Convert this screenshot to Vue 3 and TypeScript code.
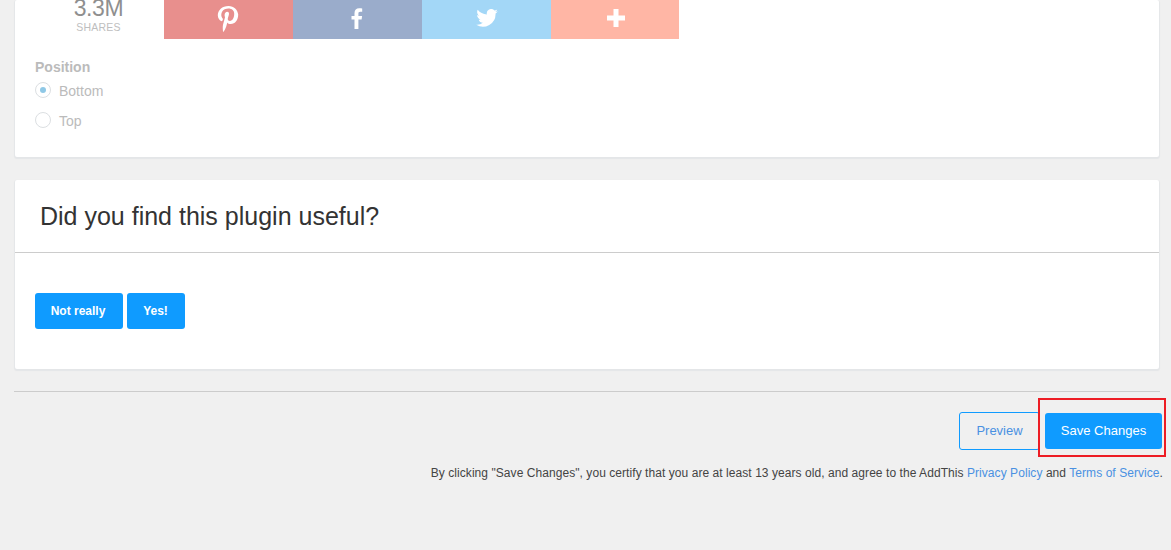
<script setup lang="ts">
const options = [
  { label: 'Bottom', checked: true },
  { label: 'Top', checked: false },
]
</script>

<template>
  <div class="page">
    <section class="card first">
      <div class="share-row">
        <div class="count">
          <div class="num">3.3M</div>
          <div class="lbl">SHARES</div>
        </div>
        <div class="tile pin">
          <svg width="22" height="26" viewBox="0 0 22 26"><path fill="#fff" d="M11.600 0C5 0 .8 4.300.8 9.200c0 2.900 1.600 5.200 4 6l.9-.9c.2-.6.3-1.200 0-1.700-1-1.100-1.400-2.200-1.400-3.500 0-3.700 2.800-6.500 7-6.500 3.800 0 5.900 2.200 5.900 5.200 0 3.900-1.700 7.100-4.300 7.100-1.400 0-2.500-1.100-2.100-2.500.4-1.700 1.200-3.500 1.200-4.700 0-1.100-.6-2-1.800-2-1.400 0-2.600 1.500-2.600 3.400 0 1.300.4 2.100.4 2.100L6 18.700c-.5 2.200-.1 5.200 0 6.700.1.400.4.500.6.300.7-.9 2.100-3.400 2.700-5.500l1-3.800c.5.900 1.900 1.700 3.400 1.700 4.500 0 7.500-4.100 7.500-9.500C20.700 4 16.900 0 11.600 0z"/></svg>
        </div>
        <div class="tile fb">
          <svg width="12" height="21" viewBox="0 0 12 21"><path fill="#fff" d="M3.500 21V11.500H.5V8h3V5.300C3.500 2 5.300.3 8.200.3c1.300 0 2.300.1 3 .2v3.200H9.300c-1.500 0-1.900.7-1.900 1.800V8h3.700l-.5 3.500H7.400V21z"/></svg>
        </div>
        <div class="tile tw">
          <svg width="22" height="18" viewBox="0 0 24 20"><path fill="#fff" d="M24 2.400c-.9.400-1.800.7-2.800.8 1-.6 1.800-1.600 2.200-2.700-1 .6-2 1-3.100 1.200A4.900 4.900 0 0 0 11.900 6.200C7.800 6 4.100 4 1.700.9c-1.300 2.200-.6 5.100 1.500 6.500-.8 0-1.500-.2-2.200-.6 0 2.300 1.600 4.500 4 5-.7.200-1.500.2-2.200.1.600 2 2.400 3.400 4.600 3.400A9.900 9.900 0 0 1 0 17.400 14 14 0 0 0 21.500 5c1-.7 1.800-1.600 2.500-2.600z"/></svg>
        </div>
        <div class="tile plus">
          <svg width="18" height="18" viewBox="0 0 18 18"><path fill="#fff" d="M6.500 0h5v6.500H18v5h-6.500V18h-5v-6.500H0v-5h6.500z"/></svg>
        </div>
      </div>
      <div class="position">
        <div class="pos-title">Position</div>
        <label v-for="o in options" :key="o.label" class="radio">
          <span class="dot" :class="{ on: o.checked }"></span>
          <span class="radio-text">{{ o.label }}</span>
        </label>
      </div>
    </section>

    <section class="card second">
      <h2 class="head">Did you find this plugin useful?</h2>
      <div class="body">
        <button class="btn not" type="button">Not really</button>
        <button class="btn yes" type="button">Yes!</button>
      </div>
    </section>

    <hr class="rule" />

    <div class="actions">
      <button class="ghost" type="button">Preview</button>
      <div class="save-wrap">
        <button class="btn save" type="button">Save Changes</button>
        <span class="highlight"></span>
      </div>
    </div>

    <p class="legal">
      By clicking "Save Changes", you certify that you are at least 13 years old, and agree to the AddThis
      <a>Privacy Policy</a> and <a>Terms of Service</a>.
    </p>
  </div>
</template>

<style>
html, body { margin: 0; background: #f0f0f0; }
</style>

<style scoped>
.page {
  height: 550px;
  overflow: hidden;
  background: #f0f0f0;
  font-family: "Liberation Sans", Arial, sans-serif;
  position: relative;
}
.card {
  margin: 0 12px 0 15px;
  background: #fff;
  border-radius: 2px;
  box-shadow: 0 1px 1px 1px #e4e6e8;
}
.first { height: 157px; }
.share-row { display: flex; height: 39px; margin-left: 20px; }
.count { width: 129px; text-align: center; padding-right: 2px; box-sizing: border-box; }
.num {
  font-size: 23px; line-height: 22px; margin-top: -3px; letter-spacing: -0.4px;
  color: #8f8f8f;
}
.lbl { font-size: 10.5px; line-height: 12px; margin-top: 2px; color: #bebebe; letter-spacing: 0.2px; }
.tile {
  width: 129px; height: 39px; box-sizing: border-box;
  display: flex; align-items: center; justify-content: center;
  padding-bottom: 9px;
}
.tile svg { margin-top: 6px; }
.pin { background: #e88f8d; }
.pin svg { margin-left: -1px; margin-top: 7px; }
.fb { background: #9aaccb; }
.fb svg { margin-left: -1px; }
.tw { background: #a3d7f7; }
.plus { background: #ffb6a5; width: 128px; }
.plus svg { margin-left: 2px; }
.position { margin: 20px 0 0 20px; }
.pos-title { font-size: 14px; line-height: 16px; font-weight: 700; color: #bbb; }
.radio { display: flex; align-items: center; gap: 8px; height: 30px; font-size: 14px; color: #bbb; }
.radio-text { margin-top: 2px; }
.dot {
  width: 16px; height: 16px; box-sizing: border-box;
  border: 1px solid #dcdfe2; border-radius: 50%;
  display: flex; align-items: center; justify-content: center;
}
.dot.on::after { content: ""; width: 6px; height: 6px; border-radius: 50%; background: #8fc8e6; }
.second { margin-top: 23px; height: 189px; }
.head {
  margin: 0; height: 73px; box-sizing: border-box; padding-left: 25px;
  font-size: 25px; font-weight: 400; line-height: 73px; color: #333;
  border-bottom: 1px solid #ccc;
}
.body { display: flex; gap: 4px; padding: 40px 20px 0; }
.btn {
  height: 36px; padding: 0; border: 0; border-radius: 3px;
  background: #0f9bff; color: #fff;
  font: 700 12px "Liberation Sans", Arial, sans-serif;
}
.not { width: 88px; padding-right: 2px; }
.yes { width: 58px; padding-right: 1px; }
.rule { margin: 22px 11px 0 14px; border: 0; border-top: 1px solid #ccc; }
.actions { display: flex; justify-content: flex-end; align-items: center; gap: 5px; margin: 20px 9px 0 0; }
.ghost {
  width: 81px; height: 38px; box-sizing: border-box; padding: 0 0 2px;
  background: transparent; border: 1px solid #0f9bff; border-radius: 3px;
  color: #4a90e2; font: 400 13px "Liberation Sans", Arial, sans-serif;
}
.save-wrap { position: relative; display: flex; }
.save { width: 117px; font-weight: 400; font-size: 13px; padding-bottom: 2px; }
.highlight {
  position: absolute; left: -7px; top: -15px; width: 128px; height: 59px;
  box-sizing: border-box; border: 2px solid #ed1c24; pointer-events: none;
}
.legal {
  margin: 15px 8px 0 0; text-align: right;
  font-size: 12px; line-height: 16px; color: #444; letter-spacing: 0.06px;
}
.legal a { color: #4a90e2; }
</style>
